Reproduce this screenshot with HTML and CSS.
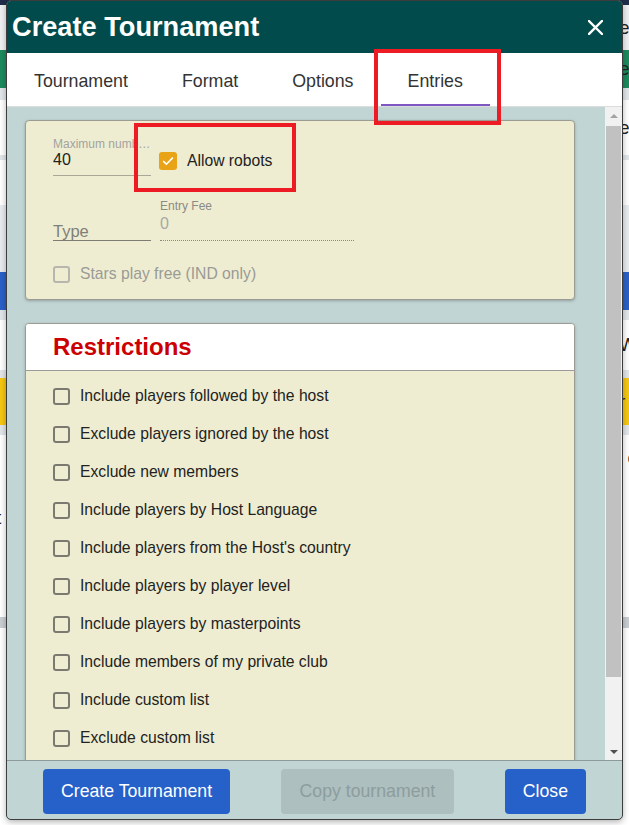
FILE: index.html
```html
<!DOCTYPE html>
<html lang="en">
<head>
<meta charset="utf-8">
<title>Create Tournament</title>
<link rel="stylesheet" href="styles.css">
</head>
<body>
<div class="backdrop">
  <div class="band b-navy"></div>
  <div class="band b-light"><span class="peek">e</span></div>
  <div class="band b-green"><span class="peek">e</span></div>
  <div class="band b-gray1"></div>
  <div class="band b-white1"><span class="peek">e</span></div>
  <div class="band b-gray2"></div>
  <div class="band b-white2"><span class="peek">l</span></div>
  <div class="band b-light2"></div>
  <div class="band b-blue"></div>
  <div class="band b-gray3"></div>
  <div class="band b-white3"><span class="peek">W</span></div>
  <div class="band b-gray4"></div>
  <div class="band b-yellow"><span class="peek">r</span></div>
  <div class="band b-gray5"></div>
  <div class="band b-white4"><span class="lpeek">t</span><span class="peek peek-o">o</span></div>
  <div class="band b-gray6"></div>
  <div class="band b-white5"></div>
</div>

<div class="dialog">
  <header class="dlg-head">
    <h1 class="dlg-title">Create Tournament</h1>
    <svg class="dlg-close" width="15" height="15" viewBox="0 0 15 15" aria-label="Close">
      <path d="M1 1 L14 14 M14 1 L1 14" stroke="#fff" stroke-width="2.4" stroke-linecap="square" fill="none"/>
    </svg>
  </header>

  <nav class="tabs">
    <div class="tab">Tournament</div>
    <div class="tab">Format</div>
    <div class="tab">Options</div>
    <div class="tab active">Entries</div>
  </nav>

  <div class="dlg-body">
    <div class="scroll">
      <section class="card card-entries">
        <div class="row row-1">
          <div class="field fld-max">
            <div class="flabel">Maximum number of entries</div>
            <div class="fvalue">40</div>
          </div>
          <label class="check check-robots">
            <span class="cb cb-on">
              <svg width="12" height="10" viewBox="0 0 12 10"><path d="M1.2 5.2 L4.4 8.2 L10.8 1.6" stroke="#fff" stroke-width="1.6" fill="none"/></svg>
            </span>
            <span class="check-text">Allow robots</span>
          </label>
        </div>
        <div class="row row-2">
          <div class="field fld-type"><div class="ftype">Type</div></div>
          <div class="field fld-fee">
            <div class="flabel flabel-dark">Entry Fee</div>
            <div class="fvalue fvalue-dis">0</div>
          </div>
        </div>
        <div class="row row-3">
          <label class="check check-dis">
            <span class="cb cb-dis"></span>
            <span class="check-text">Stars play free (IND only)</span>
          </label>
        </div>
      </section>

      <section class="card card-restrict">
        <div class="card-head"><h2 class="card-title">Restrictions</h2></div>
        <div class="card-list">
          <label class="item"><span class="cb"></span><span>Include players followed by the host</span></label>
          <label class="item"><span class="cb"></span><span>Exclude players ignored by the host</span></label>
          <label class="item"><span class="cb"></span><span>Exclude new members</span></label>
          <label class="item"><span class="cb"></span><span>Include players by Host Language</span></label>
          <label class="item"><span class="cb"></span><span>Include players from the Host's country</span></label>
          <label class="item"><span class="cb"></span><span>Include players by player level</span></label>
          <label class="item"><span class="cb"></span><span>Include players by masterpoints</span></label>
          <label class="item"><span class="cb"></span><span>Include members of my private club</span></label>
          <label class="item"><span class="cb"></span><span>Include custom list</span></label>
          <label class="item"><span class="cb"></span><span>Exclude custom list</span></label>
        </div>
      </section>
    </div>
    <div class="scrollbar">
      <div class="sb-btn"><span class="tri tri-up"></span></div>
      <div class="sb-thumb"></div>
      <div class="sb-space"></div>
      <div class="sb-btn"><span class="tri tri-down"></span></div>
    </div>
  </div>

  <footer class="dlg-foot">
    <button class="btn btn-primary">Create Tournament</button>
    <button class="btn btn-disabled">Copy tournament</button>
    <button class="btn btn-primary">Close</button>
  </footer>

  <div class="mark mark-tab"></div>
  <div class="mark mark-robots"></div>
</div>
</body>
</html>
```

FILE: styles.css
```css
html, body {
  margin: 0;
  padding: 0;
}
body {
  width: 629px;
  height: 825px;
  overflow: hidden;
  position: relative;
  font-family: "Liberation Sans", Arial, sans-serif;
  background: #fff;
}

/* ---------- background page ---------- */
.backdrop {
  display: flex;
  flex-direction: column;
  height: 825px;
}
.band {
  flex: none;
  display: flex;
  align-items: center;
  font-size: 19px;
  color: #222;
  overflow: hidden;
  white-space: nowrap;
}
.peek { margin-left: 619px; }
.peek-o { margin-left: auto; margin-right: -9px; align-self: flex-start; margin-top: 12px; }
.lpeek { margin-left: -4px; margin-top: 72px; }
.b-navy { height: 5px; background: #1f2d4a; }
.b-light { height: 45px; background: #eef0f2; }
.b-green { height: 38px; background: #1d8b5e; }
.b-gray1 { height: 12px; background: #e3e6e9; }
.b-white1 { height: 55px; background: #fff; }
.b-gray2 { height: 5px; background: #e3e6e9; }
.b-white2 { height: 45px; background: #fff; }
.b-light2 { height: 67px; background: #e9ecef; }
.b-blue { height: 38px; background: #2a61c8; }
.b-gray3 { height: 10px; background: #e3e6e9; }
.b-white3 { height: 50px; background: #fff; }
.b-gray4 { height: 8px; background: #e3e6e9; }
.b-yellow { height: 47px; background: #f6c712; }
.b-gray5 { height: 10px; background: #e3e6e9; }
.b-white4 { height: 182px; background: #fff; align-items: flex-start; }
.b-gray6 { height: 11px; background: #c9ced3; }
.b-white5 { height: 197px; background: #fff; }

/* ---------- dialog ---------- */
.dialog {
  position: absolute;
  left: 6px;
  top: 0;
  width: 617px;
  height: 820px;
  box-sizing: border-box;
  border: 1px solid #3c3c3c;
  border-radius: 5px;
  overflow: hidden;
  display: flex;
  flex-direction: column;
  background: #c1d5d4;
  box-shadow: 0 2px 6px rgba(0, 0, 0, 0.3);
}

.dlg-head {
  flex: none;
  height: 52px;
  background: #014b4d;
  display: flex;
  align-items: center;
  justify-content: space-between;
  padding: 0 19px 0 5px;
}
.dlg-title {
  margin: 0;
  font-size: 27.2px;
  font-weight: bold;
  line-height: 1;
  color: #fff;
}
.dlg-close { display: block; }

.tabs {
  flex: none;
  height: 54px;
  box-sizing: border-box;
  background: #fff;
  border-bottom: 1px solid #dcdcdc;
  display: flex;
}
.tab {
  box-sizing: border-box;
  height: 53px;
  padding: 5px 27px 0;
  display: flex;
  align-items: center;
  font-size: 17.8px;
  color: #333;
  border-bottom: 2px solid transparent;
}
.tab.active { border-bottom-color: #7e57c2; }

.dlg-body {
  flex: 1;
  display: flex;
  min-height: 0;
}
.scroll {
  flex: 1;
  overflow: hidden;
  padding: 13px 30px 0 18px;
}

/* scrollbar */
.scrollbar {
  flex: none;
  width: 17px;
  background: #f1f1f1;
  display: flex;
  flex-direction: column;
}
.sb-btn {
  flex: none;
  height: 17px;
  display: flex;
  align-items: center;
  justify-content: center;
}
.sb-thumb {
  flex: none;
  margin: 2px 1px 0;
  height: 551px;
  background: #c1c1c1;
}
.sb-space { flex: 1; }
.tri {
  width: 0;
  height: 0;
  border-left: 4px solid transparent;
  border-right: 4px solid transparent;
}
.tri-up { border-bottom: 4px solid #a3a3a3; }
.tri-down { border-top: 4px solid #505050; }

/* cards */
.card {
  background: #efedd1;
  border: 1px solid #9c9c94;
  border-radius: 4px;
  box-shadow: 0 1px 3px rgba(0, 0, 0, 0.25);
}
.card-entries {
  box-sizing: border-box;
  height: 180px;
  padding: 16px 0 0 27px;
}
.row { display: flex; }
.row-1 { align-items: flex-end; gap: 8px; }
.row-2 { align-items: flex-end; gap: 9px; margin-top: 23px; }
.row-3 { margin-top: 24px; }

.field { flex: none; }
.fld-max {
  width: 98px;
  padding-bottom: 6px;
  border-bottom: 1px solid #a9a896;
}
.flabel {
  font-size: 12px;
  line-height: 14px;
  color: #a2a2a0;
  white-space: nowrap;
  overflow: hidden;
  text-overflow: ellipsis;
}
.flabel-dark { color: #8a8a86; }
.fvalue {
  font-size: 16px;
  line-height: 18px;
  color: #222;
}
.fvalue-dis { color: #a8a8a4; margin-top: 2px; }
.fld-type {
  width: 98px;
  border-bottom: 1px solid #7d7d76;
}
.ftype {
  font-size: 16.5px;
  line-height: 18px;
  color: #80807a;
}
.fld-fee {
  width: 194px;
  padding-bottom: 7px;
  border-bottom: 1px dotted #8a8a84;
}

.check {
  display: flex;
  align-items: center;
  font-size: 15.7px;
  line-height: 18px;
  color: #222;
}
.check-robots { margin-bottom: 6px; gap: 10px; }
.check-dis { gap: 10px; color: #9a9a96; }

.cb {
  flex: none;
  box-sizing: border-box;
  width: 17px;
  height: 17px;
  border: 2px solid #7a7a70;
  border-radius: 3px;
}
.cb-on {
  width: 18px;
  height: 18px;
  border: none;
  background: #e9a316;
  display: flex;
  align-items: center;
  justify-content: center;
}
.cb-on svg { display: block; }
.cb-dis { border-color: #b6b6ae; }

.card-restrict {
  margin-top: 23px;
  overflow: hidden;
}
.card-head {
  height: 46px;
  background: #fff;
  border-bottom: 1px solid #9a9a9a;
  display: flex;
  align-items: center;
  padding-left: 27px;
}
.card-title {
  margin: 0;
  font-size: 24px;
  font-weight: bold;
  line-height: 1;
  color: #cc0000;
}
.card-list {
  padding: 6px 0 20px 27px;
}
.item {
  height: 38px;
  display: flex;
  align-items: center;
  gap: 10px;
  font-size: 15.7px;
  color: #222;
}

/* footer */
.dlg-foot {
  flex: none;
  height: 59px;
  box-sizing: border-box;
  border-top: 1px solid #8e9999;
  padding: 8px 36px 0;
  display: flex;
  justify-content: space-between;
  align-items: flex-start;
}
.btn {
  height: 45px;
  padding: 0 18px;
  border: none;
  border-radius: 4px;
  font-family: "Liberation Sans", Arial, sans-serif;
  font-size: 17.7px;
}
.btn-primary { background: #2660c9; color: #fff; }
.btn-disabled { background: #adbfbf; color: #8d9d9d; padding: 0 18.5px; }

/* annotation rectangles */
.mark {
  position: absolute;
  box-sizing: border-box;
  border: 4px solid #ed1c24;
}
.mark-tab { left: 367px; top: 48px; width: 127px; height: 76px; }
.mark-robots { left: 127px; top: 122px; width: 162px; height: 69px; }
```
